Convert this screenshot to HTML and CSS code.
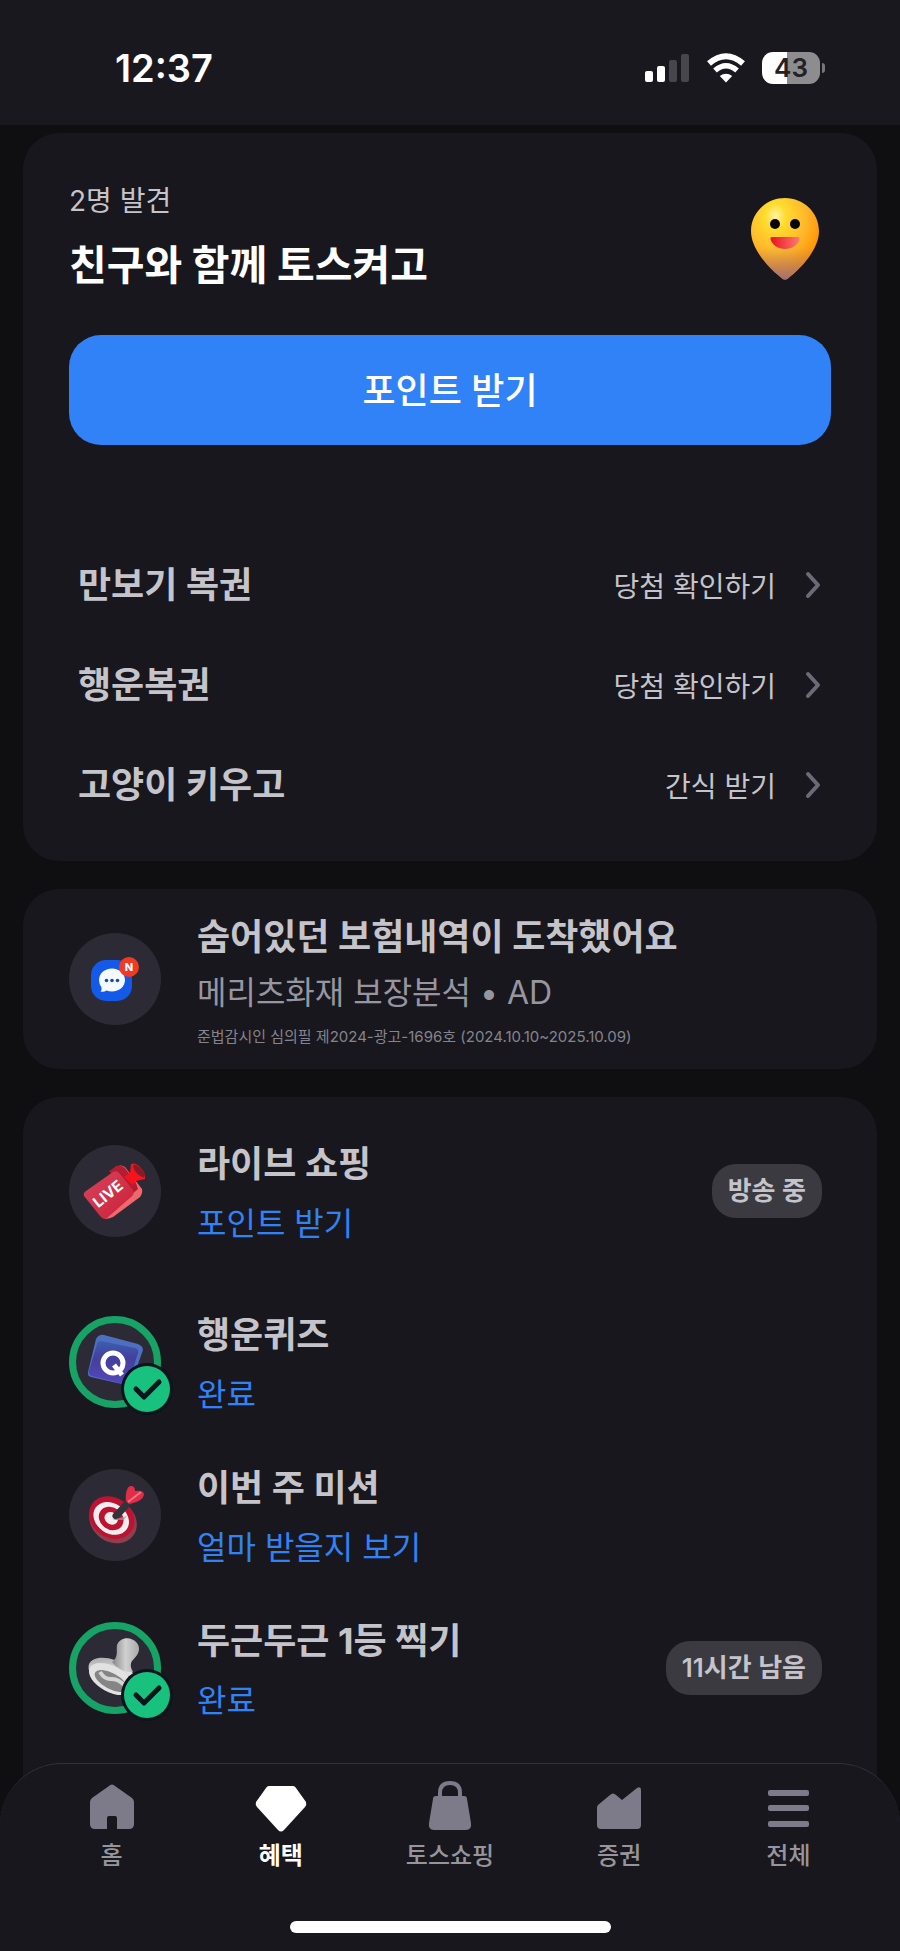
FILE: index.html
```html
<!DOCTYPE html>
<html lang="ko">
<head>
<meta charset="utf-8">
<meta name="viewport" content="width=device-width, initial-scale=1">
<title>혜택</title>
<link rel="stylesheet" href="styles.css">
</head>
<body>
<div class="screen">
  <header class="status">
    <time class="clock">12:37</time>
    <div class="indicators">
      <svg class="signal" viewBox="0 0 46 30" aria-hidden="true">
        <rect x="1" y="18" width="8" height="11" rx="2" fill="#fff"/>
        <rect x="13" y="13" width="8" height="16" rx="2" fill="#fff"/>
        <rect x="25" y="7" width="8" height="22" rx="2" fill="#47464c"/>
        <rect x="37" y="1" width="8" height="28" rx="2" fill="#47464c"/>
      </svg>
      <svg class="wifi" viewBox="0 0 40 30" aria-hidden="true">
        <path d="M3 10.500Q20-4 37 10.500" fill="none" stroke="#fff" stroke-width="6"/>
        <path d="M9 17.500Q20 8 31 17.500" fill="none" stroke="#fff" stroke-width="5.500"/>
        <path d="M20 29.500 13.800 23Q20 18.500 26.200 23Z" fill="#fff"/>
      </svg>
      <div class="battery"><span class="battery-level">43</span><i class="battery-cap"></i></div>
    </div>
  </header>

  <main class="content">
    <section class="card card-hero">
      <div class="hero">
        <div class="hero-text">
          <p class="hero-label">2명 발견</p>
          <h1 class="hero-title">친구와 함께 토스켜고</h1>
        </div>
        <svg class="mascot" viewBox="0 0 68 82" aria-hidden="true">
          <defs>
            <radialGradient id="face" cx=".36" cy=".22" r=".85">
              <stop offset="0" stop-color="#fff3a0"/><stop offset=".18" stop-color="#ffdc2e"/>
              <stop offset=".55" stop-color="#ffb52a"/><stop offset=".85" stop-color="#ff9200"/>
            </radialGradient>
            <linearGradient id="tip" x1="0" y1="0" x2="0" y2="1">
              <stop offset=".6" stop-color="#b5806a" stop-opacity="0"/><stop offset="1" stop-color="#a07078"/>
            </linearGradient>
            <linearGradient id="mouth"><stop offset="0" stop-color="#e8131f"/><stop offset="1" stop-color="#ff7a70"/></linearGradient>
          </defs>
          <path d="M34 0C53 0 68 15 68 33C68 52 49 71 37.500 80Q34 83 30.500 80C19 71 0 52 0 33C0 15 15 0 34 0Z" fill="url(#face)"/>
          <path d="M34 0C53 0 68 15 68 33C68 52 49 71 37.500 80Q34 83 30.500 80C19 71 0 52 0 33C0 15 15 0 34 0Z" fill="url(#tip)"/>
          <circle cx="24" cy="26" r="5" fill="#050505"/><circle cx="44" cy="26" r="5" fill="#050505"/>
          <path d="M21 39H47Q49 39 48.500 41C47 47 41 51 34 51S21 47 19.500 41Q19 39 21 39Z" fill="url(#mouth)"/>
        </svg>
      </div>
      <button class="primary" type="button">포인트 받기</button>
      <ul class="links">
        <li><a class="link-row" href="#"><span class="row-title">만보기 복권</span><span class="row-action">당첨 확인하기</span><svg class="chevron" viewBox="0 0 18 28" aria-hidden="true"><path d="M4 3 14 14 4 25"/></svg></a></li>
        <li><a class="link-row" href="#"><span class="row-title">행운복권</span><span class="row-action">당첨 확인하기</span><svg class="chevron" viewBox="0 0 18 28" aria-hidden="true"><path d="M4 3 14 14 4 25"/></svg></a></li>
        <li><a class="link-row" href="#"><span class="row-title">고양이 키우고</span><span class="row-action">간식 받기</span><svg class="chevron" viewBox="0 0 18 28" aria-hidden="true"><path d="M4 3 14 14 4 25"/></svg></a></li>
      </ul>
    </section>

    <a class="card card-ad" href="#">
      <svg class="icon" viewBox="0 0 92 92" aria-hidden="true">
        <circle cx="46" cy="46" r="46" fill="#2c2b35"/>
        <rect x="22" y="27" width="41" height="41" rx="15" fill="#145ae8"/>
        <path d="M43 35.500C50.500 35.500 56 40.500 56 47S50.500 58.500 43 58.500Q40 58.500 37.500 57.500Q35 59.500 31.500 58.500Q33 57 32.500 54.500Q30 51.500 30 47C30 40.500 35.500 35.500 43 35.500Z" fill="#f4f8ff"/>
        <circle cx="37.500" cy="47.500" r="1.800" fill="#1c4aa8"/><circle cx="43" cy="47.500" r="1.800" fill="#1c4aa8"/><circle cx="48.500" cy="47.500" r="1.800" fill="#1c4aa8"/>
        <circle cx="60" cy="34" r="10" fill="#f03a24"/>
        <text class="badge-letter" x="60" y="38" text-anchor="middle">N</text>
      </svg>
      <span class="item-text">
        <strong class="row-title">숨어있던 보험내역이 도착했어요</strong>
        <span class="ad-sponsor">메리츠화재 보장분석 • AD</span>
        <small class="ad-notice">준법감시인 심의필 제2024-광고-1696호 (2024.10.10~2025.10.09)</small>
      </span>
    </a>

    <section class="card card-missions">
      <a class="item item-live" href="#">
        <svg class="icon" viewBox="0 0 92 92" aria-hidden="true">
          <defs><linearGradient id="live" x1="0" y1="0" x2="1" y2="1"><stop offset="0" stop-color="#d9445a"/><stop offset="1" stop-color="#c9203a"/></linearGradient></defs>
          <circle cx="46" cy="46" r="46" fill="#2c2b35"/>
          <path d="M46 22Q52 19 56 22L73 44Q74 48 71 52L44 72Q38 75 34 73L40 40Z" fill="#f0686c"/>
          <path d="M40 26 48 21Q53 20 56 23L67 38 69 44 62 50Z" fill="#b51c31"/>
          <path d="M17 46 44 27Q48 25 51 29L64 45Q66 49 62 52L38 73Q34 75 31 71L15 51Q14 48 17 46Z" fill="url(#live)"/>
          <path d="M55 32 61 28 62 19Q66 17 71 22Q77 28 76 34L67 36 64 40Z" fill="#f5141d"/>
          <ellipse cx="70" cy="26" rx="3" ry="8" transform="rotate(-42 70 26)" fill="#851a2b"/>
          <text class="live-label" x="39" y="54" text-anchor="middle" transform="rotate(-39 39 49)">LIVE</text>
        </svg>
        <span class="item-text"><strong class="row-title">라이브 쇼핑</strong><span class="item-sub">포인트 받기</span></span>
        <span class="tag">방송 중</span>
      </a>
      <a class="item" href="#">
        <svg class="icon" viewBox="0 0 92 92" aria-hidden="true">
          <defs><linearGradient id="tile" x1="0" y1="0" x2="0" y2="1"><stop offset="0" stop-color="#3d5eb0"/><stop offset=".4" stop-color="#43409c"/><stop offset="1" stop-color="#5547bd"/></linearGradient></defs>
          <circle cx="46" cy="46" r="42.500" fill="#2c2b35" stroke="#17a266" stroke-width="7"/>
          <path d="M27 23Q30 18 35 19L69 28Q74 30 74 34L63 65Q61 70 57 69L22 61Q18 60 19 56Z" fill="#4c6fc2"/>
          <path d="M32 25 66 32Q70 33 69 37L60 65Q58 69 54 68L23 60Q19 59 20 55L28 28Q29 25 32 25Z" fill="url(#tile)"/>
          <circle cx="44" cy="47" r="10" fill="none" stroke="#fff" stroke-width="5"/>
          <path d="M45 49 53 59" stroke="#fff" stroke-width="5"/>
          <g class="done"><circle cx="78" cy="73" r="26" fill="#08151c"/><circle cx="78" cy="73" r="23" fill="#18c17d"/><path d="M67 73 75 81 90 66"/></g>
        </svg>
        <span class="item-text"><strong class="row-title">행운퀴즈</strong><span class="item-sub">완료</span></span>
      </a>
      <a class="item" href="#">
        <svg class="icon" viewBox="0 0 92 92" aria-hidden="true">
          <circle cx="46" cy="46" r="46" fill="#2c2b35"/>
          <g transform="rotate(35 43 50)">
            <ellipse cx="45" cy="51" rx="25" ry="21" fill="#8e3e4d"/>
            <ellipse cx="42" cy="49" rx="24" ry="20" fill="#bd1232"/>
            <ellipse cx="42" cy="50" rx="19" ry="15" fill="#f2eef0"/>
            <ellipse cx="42" cy="50" rx="13" ry="11" fill="#bd1232"/>
            <ellipse cx="42" cy="50" rx="7" ry="6" fill="#f2eef0"/>
          </g>
          <path d="M47 47 60 33" stroke="#333439" stroke-width="7" stroke-linecap="round"/>
          <path d="M43 51H55L58 47Z" fill="#9c9ba9" opacity=".7"/>
          <path d="M57 32C56 25 58 17 62 17Q66 17 66 22Q74 21 75 25C75 31 66 34 60 35Z" fill="#e02d48"/>
          <path d="M59 33 72 23" stroke="#fa7180" stroke-width="2"/>
        </svg>
        <span class="item-text"><strong class="row-title">이번 주 미션</strong><span class="item-sub">얼마 받을지 보기</span></span>
      </a>
      <a class="item" href="#">
        <svg class="icon" viewBox="0 0 92 92" aria-hidden="true">
          <defs>
            <linearGradient id="handle"><stop offset="0" stop-color="#858585"/><stop offset=".5" stop-color="#d0d0d0"/><stop offset="1" stop-color="#aaa"/></linearGradient>
            <linearGradient id="base" x1="0" y1="0" x2="1" y2="1"><stop offset="0" stop-color="#9c9c9c"/><stop offset=".5" stop-color="#dedede"/><stop offset="1" stop-color="#aaa"/></linearGradient>
          </defs>
          <circle cx="46" cy="46" r="42.500" fill="#2c2b35" stroke="#17a266" stroke-width="7"/>
          <ellipse cx="43" cy="52" rx="25" ry="14" transform="rotate(24 43 52)" fill="url(#base)"/>
          <path d="M43 40C50 35 47 28 48 23C51 15 62 14 68 21C73 28 68 34 63 39Q60 43 64 50Q50 50 43 40Z" fill="url(#handle)"/>
          <ellipse cx="42" cy="57" rx="24" ry="13" transform="rotate(28 42 57)" fill="#e2e2e2"/>
          <ellipse cx="42" cy="59" rx="18" ry="8" transform="rotate(28 42 59)" fill="#858585"/>
          <path d="M31 50Q36 58 43 57Q50 57 57 65" fill="none" stroke="#d5d5d5" stroke-width="4"/>
          <g class="done"><circle cx="78" cy="73" r="26" fill="#08151c"/><circle cx="78" cy="73" r="23" fill="#18c17d"/><path d="M67 73 75 81 90 66"/></g>
        </svg>
        <span class="item-text"><strong class="row-title">두근두근 1등 찍기</strong><span class="item-sub">완료</span></span>
        <span class="tag">11시간 남음</span>
      </a>
    </section>
  </main>

  <nav class="tabs">
    <div class="tab-list">
      <a class="tab" href="#"><svg class="tab-icon" viewBox="0 0 52 52" aria-hidden="true"><path d="M23 4Q26 1 29 4L46 16Q48 18 48 20V42Q48 47 43 47H31V36Q31 34 29 34H23Q21 34 21 36V47H9Q4 47 4 42V20Q4 18 6 16Z"/></svg>홈</a>
      <a class="tab tab-active" href="#" aria-current="page"><svg class="tab-icon" viewBox="0 0 52 52" aria-hidden="true"><path d="M14 4H38Q40 4 41 6L51 20Q52 23 50 25L29 48Q26 51 23 48L2 25Q0 23 1 20L11 6Q12 4 14 4Z"/></svg>혜택</a>
      <a class="tab" href="#"><svg class="tab-icon" viewBox="0 0 52 52" aria-hidden="true"><path d="M16 16V11Q16 1 26 1T36 11V16" fill="none" stroke="#7d7a8a" stroke-width="4"/><path d="M12 14H40Q43 14 43 17L47 41Q48 48 42 48H10Q4 48 5 41L9 17Q9 14 12 14Z"/></svg>토스쇼핑</a>
      <a class="tab" href="#"><svg class="tab-icon" viewBox="0 0 52 52" aria-hidden="true"><path d="M5 23 17 13Q20 10 23 13L29 18 44 6Q48 4 48 8V43Q48 47 44 47H8Q4 47 4 43V26Q4 24 5 23Z"/></svg>증권</a>
      <a class="tab" href="#"><svg class="tab-icon" viewBox="0 0 52 52" aria-hidden="true"><rect x="6" y="8" width="41" height="6" rx="2"/><rect x="6" y="23" width="41" height="6" rx="2"/><rect x="6" y="39" width="41" height="6" rx="2"/></svg>전체</a>
    </div>
    <div class="home-bar"></div>
  </nav>
</div>
</body>
</html>
```
FILE: styles.css
```css
* { box-sizing: border-box; }
body {
  margin: 0;
  background: #0f0f11;
  color: #c5c4ca;
  font-family: Inter, "Noto Sans CJK KR", sans-serif;
}
a { color: inherit; text-decoration: none; }
p, h1, ul { margin: 0; padding: 0; list-style: none; }
svg { display: block; flex: none; overflow: visible; }

.screen { display: flex; flex-direction: column; min-height: 100vh; }

.status {
  display: flex;
  align-items: center;
  justify-content: space-between;
  height: 125px;
  padding: 10px 75px 0 115px;
  background: #19181f;
}
.clock { color: #fff; font-size: 38px; font-weight: 600; }
.indicators { display: flex; align-items: center; gap: 16px; }
.signal { width: 46px; height: 30px; }
.wifi { width: 40px; height: 30px; }
.battery { display: flex; align-items: center; gap: 2px; }
.battery-level {
  width: 58px;
  border-radius: 11px;
  background: linear-gradient(90deg, #fff 43%, #8d8d90 43%);
  color: #222126;
  font-size: 26px;
  font-weight: 600;
  line-height: 32px;
  text-align: center;
}
.battery-cap { width: 3px; height: 10px; border-radius: 0 3px 3px 0; background: #77767a; }

.content { display: flex; flex: 1; flex-direction: column; gap: 28px; padding: 8px 23px 0; }
.card { border-radius: 36px; background: #18171d; }

.card-hero { padding: 50px 46px 26px; }
.hero { display: flex; align-items: flex-end; justify-content: space-between; padding-right: 12px; }
.hero-text { display: flex; flex-direction: column; gap: 20px; }
.hero-label { font-size: 28px; line-height: 36px; }
.hero-title { color: #fff; font-size: 41px; font-weight: 700; line-height: 52px; }
.mascot { width: 68px; height: 82px; margin-bottom: 11px; }
.primary {
  width: 100%;
  height: 110px;
  margin-top: 44px;
  padding: 0 0 4px;
  border: 0;
  border-radius: 32px;
  background: #3182f6;
  color: #fff;
  font: 500 36px Inter, "Noto Sans CJK KR", sans-serif;
}
.links { margin-top: 90px; }
.link-row { display: flex; align-items: center; height: 100px; padding: 0 9px; }
.row-title { font-size: 36px; font-weight: 700; line-height: 48px; }
.row-action { margin-left: auto; font-size: 28px; }
.chevron { width: 18px; height: 28px; margin-left: 28px; }
.chevron path { fill: none; stroke: #6b6a76; stroke-width: 4; stroke-linecap: round; stroke-linejoin: round; }

.icon { width: 92px; height: 92px; }
.item-text { display: flex; flex: 1; flex-direction: column; padding-top: 4px; }
.card-ad { display: flex; align-items: center; gap: 36px; padding: 20px 46px; }
.ad-sponsor { margin-top: 10px; color: #9796a0; font-size: 32px; line-height: 44px; }
.ad-notice { margin-top: 10px; color: #85848e; font-size: 15px; line-height: 24px; }
.badge-letter { fill: #fff; font-size: 11px; font-weight: 800; }
.live-label { fill: #fff; font-size: 15px; font-weight: 700; }

.card-missions { flex: 1; padding: 23px 46px 72px; border-radius: 36px 36px 0 0; }
.item { display: flex; align-items: center; gap: 36px; height: 153px; padding-right: 9px; }
.item-live { height: 142px; margin-bottom: 23px; }
.item-sub { margin-top: 14px; color: #3182f6; font-size: 32px; line-height: 44px; }
.tag {
  padding: 0 16px;
  border-radius: 24px;
  background: #3b3a40;
  font-size: 26px;
  font-weight: 600;
  line-height: 54px;
}
.done path { fill: none; stroke: #08151c; stroke-width: 5; stroke-linecap: round; stroke-linejoin: round; }

.tabs {
  position: sticky;
  bottom: 0;
  margin-top: -64px;
  padding: 18px 27px;
  border-top: 1px solid #323139;
  border-radius: 62px 62px 0 0;
  background: #18171d;
}
.tab-list { display: grid; grid-template-columns: repeat(5, 1fr); }
.tab { display: flex; flex-direction: column; align-items: center; gap: 6px; color: #96959e; font-size: 24px; font-weight: 500; line-height: 32px; }
.tab-icon { width: 52px; height: 52px; fill: #7d7a8a; }
.tab-active { color: #fff; font-weight: 700; }
.tab-active .tab-icon { fill: #fff; }
.home-bar { width: 38%; max-width: 321px; height: 12px; margin: 49px auto 0; border-radius: 6px; background: #fff; }
```
